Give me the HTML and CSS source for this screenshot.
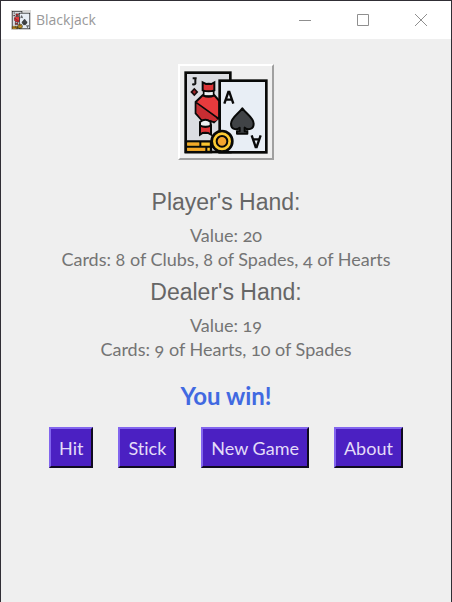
FILE: index.html
```html
<!DOCTYPE html>
<html lang="en">
<head>
<meta charset="utf-8">
<meta name="viewport" content="width=device-width, initial-scale=1">
<title>Blackjack</title>
<link rel="stylesheet" href="styles.css">
</head>
<body>
<svg width="0" height="0" class="defs" aria-hidden="true">
  <symbol id="cards" viewBox="30 30 276 276">
    <rect x="47" y="50" width="134" height="238" fill="#dbdde2" stroke="#080908" stroke-width="8"/>
    <path d="M68 67h12M76 66v17q-2 4-9 1" fill="none" stroke="#111" stroke-width="6"/>
    <path d="M73 95l12 13-12 13-12-13z" fill="#170b0c"/>
    <path d="M73 102l5 6-5 6-5-6z" fill="#a32527"/>
    <path d="M101 105h30v15h-30z" fill="#edf0f3" stroke="#090909" stroke-width="5"/>
    <path d="M98 79l10 5 8-1 8 1 9-5v24q-17 6-35 0z" fill="#dc3437" stroke="#090909" stroke-width="6"/>
    <path d="M98 118q18 9 35 0l15 17v48l-16 16q-15-9-31 0l-24-27v-34z" fill="#e83b3d" stroke="#090909" stroke-width="6"/>
    <path d="M80 144l64 47-10 5q-16-8-33 0l-21-25z" fill="#c72d32"/>
    <path d="M79 140l68 49" stroke="#090909" stroke-width="5"/>
    <path d="M90 198q16-13 32 0v14H90z" fill="#edf0f3" stroke="#090909" stroke-width="6"/>
    <path d="M90 209q16 8 33 0v27l-9-5-8-1-8 1-8 5z" fill="#dc3437" stroke="#090909" stroke-width="6"/>
    <rect x="149" y="74" width="140" height="215" fill="#e8eef5" stroke="#080908" stroke-width="8"/>
    <path d="M163 143l12-35h3l12 35M168 131h18" fill="none" stroke="#090909" stroke-width="7"/>
    <path d="M245 238l12 35h3l12-35M250 250h18" fill="none" stroke="#090909" stroke-width="7"/>
    <path d="M217 157c10 15 34 28 34 46 0 17-17 21-27 12v11h8v7h-31v-7h8v-11c-10 9-26 5-26-12 0-18 24-31 34-46z" fill="#404346" stroke="#080908" stroke-width="6" stroke-linejoin="round"/>
    <path d="M48 256h75v32H48z" fill="#fbc52f" stroke="#080908" stroke-width="7"/>
    <path d="M52 260h35v8H52zM52 276h53v8H52z" fill="#f4a827"/>
    <path d="M48 272h80M91 256v16M109 272v16" stroke="#080908" stroke-width="6"/>
    <circle cx="156" cy="256" r="31" fill="#fccb32" stroke="#080908" stroke-width="8"/>
    <circle cx="156" cy="256" r="16" fill="#f4a52e" stroke="#080908" stroke-width="6"/>
  </symbol>
</svg>
<div class="window">
  <header class="titlebar">
    <svg class="app-icon" aria-hidden="true"><use href="#cards"/></svg>
    <span class="title">Blackjack</span>
    <button class="control" aria-label="Minimize"><svg viewBox="0 0 12 12"><path d="M0 6.5h12"/></svg></button>
    <button class="control" aria-label="Maximize"><svg viewBox="0 0 12 12"><path d="M.5.5h11v11H.5z"/></svg></button>
    <button class="control" aria-label="Close"><svg viewBox="0 0 12 12"><path d="M0 0l12 12M12 0L0 12"/></svg></button>
  </header>
  <main class="game">
    <button class="logo" aria-label="Blackjack cards"><svg aria-hidden="true"><use href="#cards"/></svg></button>
    <section class="hand">
      <h2>Player's Hand:</h2>
      <p>Value: 20</p>
      <p>Cards: 8 of Clubs, 8 of Spades, 4 of Hearts</p>
    </section>
    <section class="hand">
      <h2>Dealer's Hand:</h2>
      <p>Value: 19</p>
      <p>Cards: 9 of Hearts, 10 of Spades</p>
    </section>
    <p class="result">You win!</p>
    <div class="actions">
      <button>Hit</button>
      <button>Stick</button>
      <button>New Game</button>
      <button>About</button>
    </div>
  </main>
</div>
</body>
</html>
```
FILE: styles.css
```css
* { box-sizing: border-box; }
body {
  margin: 0;
  font-family: Lato, "Open Sans", sans-serif;
  font-variant-ligatures: none;
  font-variant-numeric: oldstyle-nums;
  color: #747474;
}
.defs { position: absolute; }
.window {
  min-height: 100vh;
  border: 1px solid #302e35;
  border-bottom: 0;
  background: #efefef;
}
.titlebar { display: flex; align-items: center; height: 38px; padding: 0 1px 0 10px; background: #fff; }
.app-icon { width: 20px; height: 20px; background: #d8d8d8; }
.title { flex: 1; padding-left: 5px; font: 14px/20px "Open Sans", sans-serif; color: #999; }
.control { display: grid; place-items: center; width: 58px; height: 38px; padding: 0; border: 0; background: none; }
.control svg { width: 12px; height: 12px; fill: none; stroke: #8f8f8f; stroke-width: 1; }
.game { display: flex; flex-direction: column; align-items: center; padding: 25px 8px; text-align: center; }
.logo { width: 96px; height: 96px; padding: 0; border: 2px solid; border-color: #fff #a0a0a0 #a0a0a0 #fff; background: #efefef; }
.logo svg { display: block; width: 92px; height: 92px; }
h2, p { margin: 0; }
.logo + .hand { margin-top: 21px; }
.hand h2 { padding: 3px 0; font: 23px/36px "Liberation Sans", sans-serif; color: #666; }
.hand p { font-size: 18px; line-height: 24px; }
.result { margin-top: 20px; font-size: 24px; font-weight: 700; line-height: 30px; color: #4169e1; }
.actions { display: flex; gap: 25px; margin-top: 16px; }
.actions button {
  height: 41px;
  padding: 0 8px;
  border: 2px solid;
  border-color: #8265ee #100b20 #100b20 #8265ee;
  background: #4b20c2;
  color: #e4dcf8;
  font: 18px/24px Lato, "Open Sans", sans-serif;
  font-variant-ligatures: none;
}
```
